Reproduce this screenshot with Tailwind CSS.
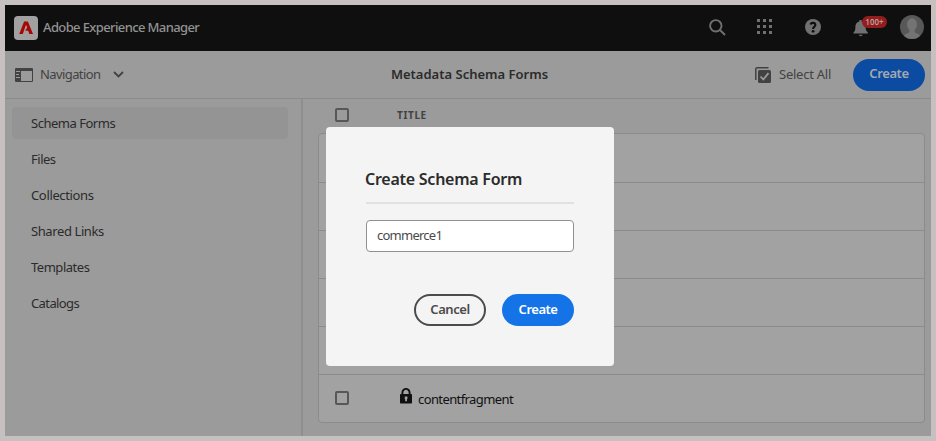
<!DOCTYPE html>
<html lang="en">
<head>
<meta charset="utf-8">
<title>Metadata Schema Forms</title>
<script src="https://cdn.jsdelivr.net/npm/@tailwindcss/browser@4"></script>
</head>
<body class="relative h-[441px] w-[936px] overflow-hidden bg-[#c6c1c0] p-[5px] font-['Noto_Sans',sans-serif] text-[13px] text-[#2b2b2b]">
<div class="flex h-[431px] w-[926px] flex-col bg-[#9b9b9b]">
  <header class="flex h-[46px] shrink-0 items-center bg-[#0f0f0f] pl-[9px] pr-[7px]">
    <svg class="h-6 w-6 shrink-0" viewBox="0 0 24 24"><rect width="24" height="24" rx="4" fill="#a1a1a1"/><path d="M10.100 5.500h3.800L19 18h-3.600l-1.300-3.200h-2.900l2-3.400-1.200-2.600L8.800 18H5.200z" fill="#a70606"/></svg>
    <h1 class="ml-[5px] whitespace-nowrap text-[13px] font-medium tracking-[-0.62px] text-[#929292]">Adobe Experience Manager</h1>
    <div class="ml-auto flex items-center text-[#707070]">
      <svg class="mb-[2px] mr-[31px] h-[17px] w-[17px]" viewBox="0 0 17 17" fill="none" stroke="currentColor" stroke-width="1.9"><circle cx="6.8" cy="6.8" r="5.7"/><path d="M11 11l5 5"/></svg>
      <svg class="mb-[2px] mr-[32px] h-[16px] w-[16px]" viewBox="0 0 16 16" fill="currentColor"><path d="M0 0h3v3H0zM6 0h3v3H6zM12 0h3v3h-3zM0 6h3v3H0zM6 6h3v3H6zM12 6h3v3h-3zM0 12h3v3H0zM6 12h3v3H6zM12 12h3v3h-3z"/></svg>
      <svg class="mb-[2px] mr-[33px] h-4 w-4" viewBox="0 0 16 16"><circle cx="8" cy="8" r="8" fill="currentColor"/><path d="M5.500 5.500C6.300 3 10.700 3.300 10.300 6.200 10.100 7.700 8.100 8 8.100 9.900" fill="none" stroke="#0f0f0f" stroke-width="2.200"/><circle cx="8.100" cy="12.300" r="1.400" fill="#0f0f0f"/></svg>
      <div class="relative mr-[30px] h-[17px] w-4">
        <svg class="-ml-px h-[17px] w-4" viewBox="0 0 16 17" fill="currentColor"><path d="M6.400.0h2.200v1.600c3 .7 4 2.800 4 5.200 0 3.300.8 4.400 2.300 5.600v1.100H.5v-1.100C2 11.200 2.400 10.100 2.400 6.800c0-2.400 1-4.500 4-5.200zM5.600 14.700h4.200c-.7 1.900-3.500 1.900-4.200 0z"/></svg>
        <span class="absolute left-[8px] top-[-4px] flex h-3 w-[25px] items-center justify-center rounded-full bg-[#931c1c] text-[8px] font-semibold text-[#b5a0a0]">100+</span>
      </div>
      <svg class="mb-[2px] h-6 w-6" viewBox="0 0 24 24"><defs><clipPath id="avatar"><circle cx="12" cy="12" r="12"/></clipPath></defs><g clip-path="url(#avatar)"><rect width="24" height="24" fill="#585858"/><ellipse cx="12" cy="9.500" rx="5" ry="6.200" fill="#737373"/><path d="M9.300 14h5.400v3.300c1.700 1.400 4.300 1.300 5.300 3.500V24H4v-3.200c1-2.200 3.600-2.100 5.300-3.500z" fill="#737373"/></g></svg>
    </div>
  </header>

  <div class="grid h-[48px] shrink-0 grid-cols-[1fr_auto_1fr] items-center border-b border-[#8b8b8b]">
    <div class="flex items-center pl-[10px] text-[#424242]">
      <svg class="h-[14px] w-[18px]" viewBox="0 0 18 14"><path fill="currentColor" fill-rule="evenodd" d="M1 0h16a1 1 0 0 1 1 1v12a1 1 0 0 1-1 1H1a1 1 0 0 1-1-1V1a1 1 0 0 1 1-1zM6 3v10h11V3zM1 3v1h4V3zM1 6v1h3V6zM1 9v1h4V9z"/></svg>
      <span class="ml-[7px] w-[61px] whitespace-nowrap tracking-[-0.6px]">Navigation</span>
      <svg class="ml-[12px] h-[7px] w-[11px]" viewBox="0 0 11 7" fill="none" stroke="currentColor" stroke-width="1.800"><path d="M1 1l4.500 4.500L10 1"/></svg>
    </div>
    <h2 class="ml-[3px] whitespace-nowrap text-[13px] font-semibold">Metadata Schema Forms</h2>
    <div class="flex items-center justify-end pr-[6px] text-[#424242]">
      <svg class="h-4 w-4" viewBox="0 0 16 16"><path d="M.8 13V2A1.200 1.200 0 0 1 2 .8h11.500" fill="none" stroke="currentColor" stroke-width="1.500"/><rect x="3" y="3" width="13" height="13" rx="1.500" fill="currentColor"/><path d="M5.500 9.500l2.800 3 5.200-6.400" fill="none" stroke="#9b9b9b" stroke-width="1.800"/></svg>
      <span class="ml-[8px] w-[52px] whitespace-nowrap tracking-[-0.25px]">Select All</span>
      <button class="ml-[22px] h-8 w-[72px] rounded-full bg-[#0b4ca2] pb-0.5 text-[13px] font-semibold tracking-[-0.4px] text-[#a4a9b0]">Create</button>
    </div>
  </div>

  <div class="flex h-[337px]">
    <nav class="flex w-[296px] shrink-0 flex-col gap-1 px-[7px] pt-2 tracking-[-0.48px]">
      <a class="flex h-8 w-[276px] items-center rounded bg-[#949494] pl-[19px] pt-0.5">Schema Forms</a>
      <a class="flex h-8 items-center pl-[19px] pt-0.5">Files</a>
      <a class="flex h-8 items-center pl-[19px] pt-0.5 tracking-[-0.35px]">Collections</a>
      <a class="flex h-8 items-center pl-[19px] pt-0.5 tracking-[-0.4px]">Shared Links</a>
      <a class="flex h-8 items-center pl-[19px] pt-0.5">Templates</a>
      <a class="flex h-8 items-center pl-[19px] pt-0.5 tracking-[-0.6px]">Catalogs</a>
    </nav>
    <main class="flex-1 border-l-2 border-[#8e8e8e] pl-[15px] pr-[6px]">
      <div class="flex h-[34px] items-center pb-0.5 pl-[17px]">
        <span class="h-[14px] w-[14px] rounded-[2px] border-2 border-[#575757]"></span>
        <span class="ml-[48px] text-[10px] font-bold tracking-[0.65px] text-[#424242]">TITLE</span>
      </div>
      <div class="h-[290px] overflow-hidden rounded border border-[#8b8b8b] bg-[#a2a2a2]">
        <div class="h-[49px] border-b border-[#8b8b8b]"></div>
        <div class="h-12 border-b border-[#8b8b8b]"></div>
        <div class="h-12 border-b border-[#8b8b8b]"></div>
        <div class="h-12 border-b border-[#8b8b8b]"></div>
        <div class="h-12 border-b border-[#8b8b8b]"></div>
        <div class="flex h-[46px] items-center pl-4">
          <span class="h-[14px] w-[14px] rounded-[2px] border-2 border-[#575757]"></span>
          <svg class="mb-1 ml-[51px] h-[16px] w-3" viewBox="0 0 12 16"><path d="M2.400 7V4.500a3.600 3.600 0 0 1 7.200 0V7" fill="none" stroke="#111" stroke-width="1.900"/><rect y="6" width="12" height="9.500" rx=".8" fill="#111"/><path d="M6 8.200a1.700 1.700 0 0 1 1 3V13.300H5.200v-2.100a1.700 1.700 0 0 1 .8-3z" fill="#a2a2a2"/></svg>
          <span class="ml-[6px] mt-1 tracking-[-0.6px] text-[#111]">contentfragment</span>
        </div>
      </div>
    </main>
  </div>
</div>

<section role="dialog" class="absolute left-[326px] top-[127px] h-[239px] w-[288px] rounded bg-[#f4f4f4] px-10 pt-10">
  <h3 class="-ml-px mr-0 h-[35px] whitespace-nowrap text-[16px] leading-6 font-semibold tracking-[-0.25px]">Create Schema Form</h3>
  <hr class="h-0.5 border-0 bg-[#e1e1e1]">
  <div class="mt-4 flex h-8 items-center rounded border border-[#909090] bg-white pl-[10px] tracking-[-0.75px] text-[#4b4b4b]">commerce1</div>
  <div class="mt-[42px] flex justify-end gap-4 text-[13px] font-semibold">
    <button class="h-8 w-[72px] rounded-full border-2 border-[#4b4b4b] tracking-[-0.45px] text-[#4b4b4b]">Cancel</button>
    <button class="h-8 w-[72px] rounded-full bg-[#1473e6] tracking-[-0.5px] text-white">Create</button>
  </div>
</section>
</body>
</html>
